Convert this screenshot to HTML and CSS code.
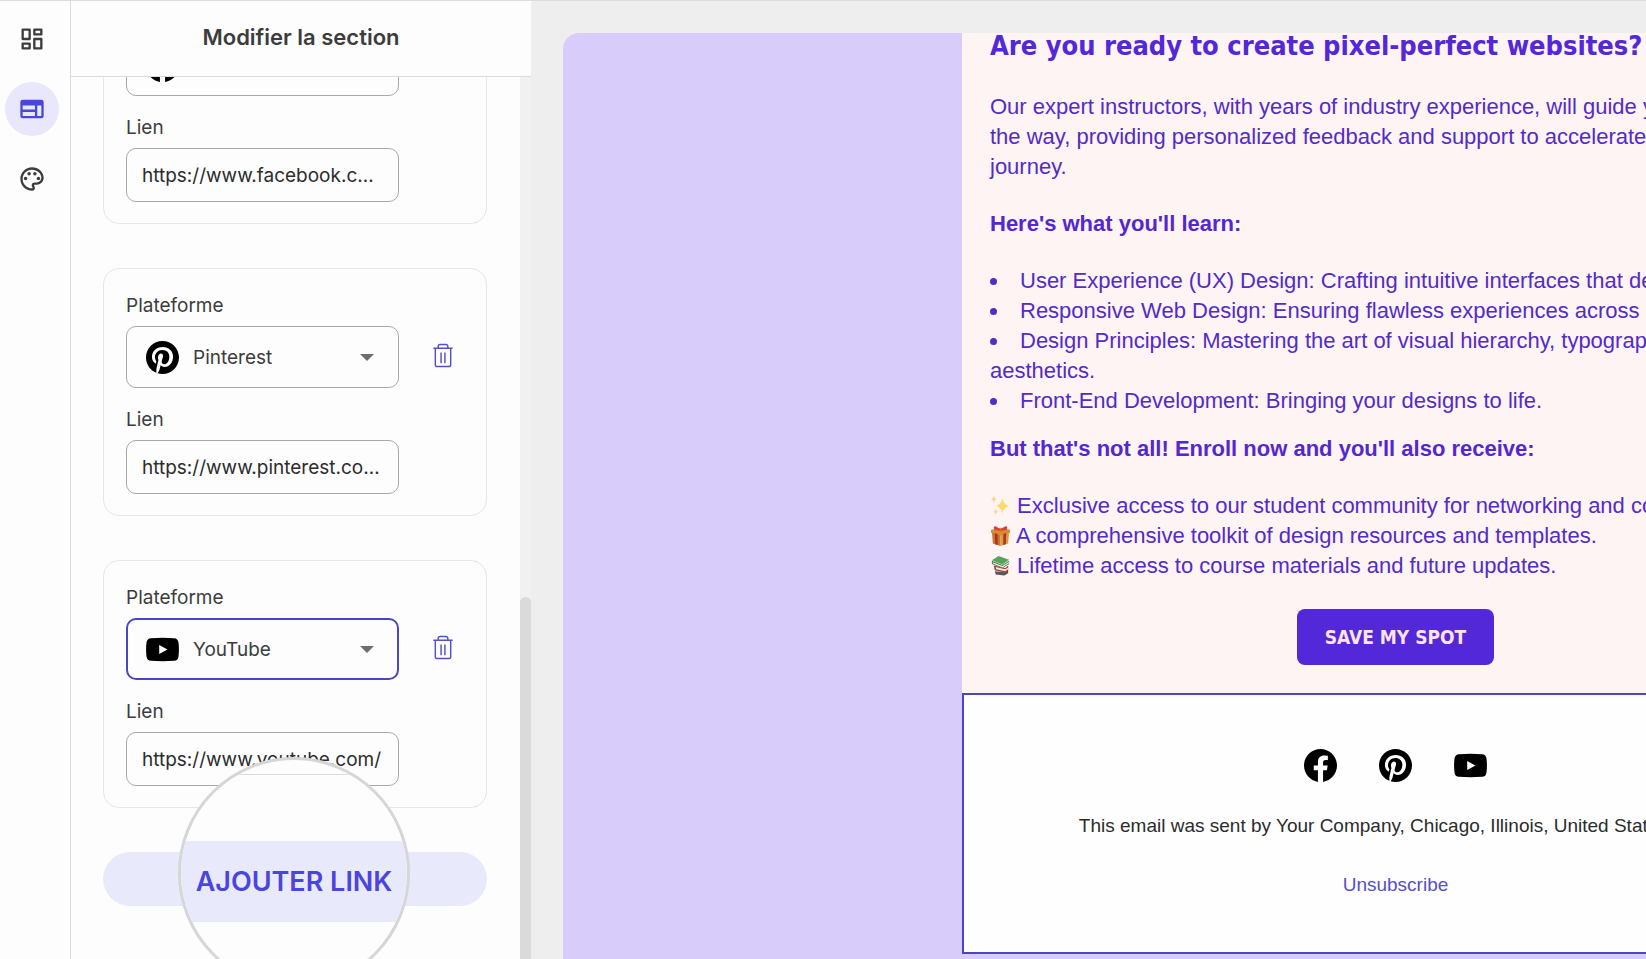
FILE: index.html
```html
<!DOCTYPE html>
<html lang="fr">
<head>
    <meta charset="UTF-8">
    <meta name="viewport" content="width=device-width, initial-scale=1.0">
    <title>Modifier la section</title>
    <link rel="stylesheet" href="styles.css">
</head>
<body>
    <!-- Shared icons -->
    <svg class="sprite" aria-hidden="true">
        <symbol id="facebook" viewBox="0 0 24 24">
            <path d="M24 12.073c0-6.627-5.373-12-12-12s-12 5.373-12 12c0 5.99 4.388 10.954 10.125 11.854v-8.385H7.078v-3.47h3.047V9.43c0-3.007 1.792-4.669 4.533-4.669 1.312 0 2.686.235 2.686.235v2.953H15.83c-1.491 0-1.956.925-1.956 1.874v2.25h3.328l-.532 3.47h-2.796v8.385C19.612 23.027 24 18.062 24 12.073z"/>
        </symbol>
        <symbol id="pinterest" viewBox="0 0 24 24">
            <path d="M12 0C5.373 0 0 5.372 0 12c0 5.084 3.163 9.426 7.627 11.174-.105-.949-.2-2.405.042-3.441.218-.937 1.407-5.965 1.407-5.965s-.359-.719-.359-1.782c0-1.668.967-2.914 2.171-2.914 1.023 0 1.518.769 1.518 1.69 0 1.029-.655 2.568-.994 3.995-.283 1.194.599 2.169 1.777 2.169 2.133 0 3.772-2.249 3.772-5.495 0-2.873-2.064-4.882-5.012-4.882-3.414 0-5.418 2.561-5.418 5.207 0 1.031.397 2.138.893 2.738a.36.36 0 0 1 .083.345l-.333 1.36c-.053.22-.174.267-.402.161-1.499-.698-2.436-2.889-2.436-4.649 0-3.785 2.75-7.262 7.929-7.262 4.163 0 7.398 2.967 7.398 6.931 0 4.136-2.607 7.464-6.227 7.464-1.216 0-2.359-.631-2.75-1.378l-.748 2.853c-.271 1.043-1.002 2.35-1.492 3.146C9.57 23.812 10.763 24 12 24c6.627 0 12-5.373 12-12S18.627 0 12 0z"/>
        </symbol>
        <symbol id="youtube" viewBox="0 0 24 24">
            <path d="M3.6 3.8Q12 3.1 20.4 3.8Q23.2 4 23.6 6.8Q24.3 12 23.6 17.2Q23.2 20 20.4 20.2Q12 20.9 3.6 20.2Q.8 20 .4 17.2Q-.3 12 .4 6.8Q.8 4 3.6 3.8zM9.6 8.8v6.4l6-3.2z"/>
        </symbol>
        <symbol id="trash" viewBox="0 0 20 26">
            <path d="M0 5.5h20M5 5.500V3.500q0-2 2-2h6q2 0 2 2v2M2 5.500v17q0 2 2 2h12q2 0 2-2v-17M8 10v11M12 10v11" fill="none" stroke="currentColor" stroke-width="1.500"/>
        </symbol>
        <symbol id="arrow" viewBox="0 0 14 7">
            <path d="M0 0h14L7 7z"/>
        </symbol>
    </svg>

    <div class="app">
        <nav class="sidebar">
            <button class="nav-btn" aria-label="Blocs">
                <svg viewBox="0 0 24 24" fill="none" stroke="currentColor" stroke-width="2" stroke-linejoin="round">
                    <rect x="4" y="4" width="6" height="8"/>
                    <rect x="14" y="4" width="6" height="4"/>
                    <rect x="14" y="12" width="6" height="8"/>
                    <rect x="4" y="16" width="6" height="4"/>
                </svg>
            </button>
            <button class="nav-btn active" aria-label="Section">
                <svg viewBox="0 0 24 24" fill="currentColor" fill-rule="evenodd">
                    <path d="M4 4h16a2 2 0 0 1 2 2v12a2 2 0 0 1-2 2H4a2 2 0 0 1-2-2V6a2 2 0 0 1 2-2zM4 9v3.500h10.500V9zM4 14.500V18h10.500v-3.500zM16.500 9v9H20V9z"/>
                </svg>
            </button>
            <button class="nav-btn" aria-label="Style">
                <svg viewBox="0 0 24 24" fill="currentColor">
                    <path d="M12 22C6.490 22 2 17.510 2 12S6.490 2 12 2s10 4.040 10 9c0 3.310-2.690 6-6 6h-1.770c-.28 0-.5.22-.5.5 0 .12.05.23.13.33.41.47.64 1.060.64 1.670A2.500 2.500 0 0 1 12 22zm0-18c-4.410 0-8 3.590-8 8s3.590 8 8 8c.28 0 .5-.22.5-.5a.54.54 0 0 0-.14-.35c-.41-.46-.63-1.050-.63-1.650a2.500 2.500 0 0 1 2.500-2.500H16c2.210 0 4-1.790 4-4 0-3.860-3.590-7-8-7z"/>
                    <circle cx="6.500" cy="11.500" r="1.500"/>
                    <circle cx="9.500" cy="7.500" r="1.500"/>
                    <circle cx="14.500" cy="7.500" r="1.500"/>
                    <circle cx="17.500" cy="11.500" r="1.500"/>
                </svg>
            </button>
        </nav>

        <section class="panel">
            <header class="panel-header">
                <h1>Modifier la section</h1>
            </header>
            <div class="panel-body">
                <!-- column-reverse keeps the list scrolled to its end -->
                <div class="panel-scroll">
                    <div class="links">
                        <div class="card">
                            <label for="platform1">Plateforme</label>
                            <div class="row">
                                <div class="select-box">
                                    <svg class="social"><use href="#facebook"/></svg>
                                    <select id="platform1">
                                        <option selected>Facebook</option>
                                        <option>Pinterest</option>
                                        <option>YouTube</option>
                                    </select>
                                    <svg class="arrow"><use href="#arrow"/></svg>
                                </div>
                                <button class="delete" aria-label="Supprimer"><svg><use href="#trash"/></svg></button>
                            </div>
                            <label for="link1">Lien</label>
                            <input type="text" id="link1" value="https://www.facebook.com/">
                        </div>

                        <div class="card">
                            <label for="platform2">Plateforme</label>
                            <div class="row">
                                <div class="select-box">
                                    <svg class="social"><use href="#pinterest"/></svg>
                                    <select id="platform2">
                                        <option>Facebook</option>
                                        <option selected>Pinterest</option>
                                        <option>YouTube</option>
                                    </select>
                                    <svg class="arrow"><use href="#arrow"/></svg>
                                </div>
                                <button class="delete" aria-label="Supprimer"><svg><use href="#trash"/></svg></button>
                            </div>
                            <label for="link2">Lien</label>
                            <input type="text" id="link2" value="https://www.pinterest.com/">
                        </div>

                        <div class="card">
                            <label for="platform3">Plateforme</label>
                            <div class="row">
                                <div class="select-box selected">
                                    <svg class="social"><use href="#youtube"/></svg>
                                    <select id="platform3">
                                        <option>Facebook</option>
                                        <option>Pinterest</option>
                                        <option selected>YouTube</option>
                                    </select>
                                    <svg class="arrow"><use href="#arrow"/></svg>
                                </div>
                                <button class="delete" aria-label="Supprimer"><svg><use href="#trash"/></svg></button>
                            </div>
                            <label for="link3">Lien</label>
                            <input type="text" id="link3" value="https://www.youtube.com/">
                        </div>

                        <button class="add-link">
                            <span class="magnifier">
                                <span class="magnifier-top"></span>
                                <span class="magnifier-label">AJOUTER LINK</span>
                            </span>
                        </button>
                    </div>
                </div>
                <div class="scrollbar"><div class="thumb"></div></div>
            </div>
        </section>

        <main class="canvas">
            <div class="email">
                <article class="email-body" lang="en">
                    <div class="email-text">
                        <h2>Are you ready to create pixel-perfect websites?</h2>
                        <p>Our expert instructors, with years of industry experience, will guide you every step of<br>the way, providing personalized feedback and support to accelerate your learning<br>journey.</p>
                        <h3>Here's what you'll learn:</h3>
                        <ul class="topics">
                            <li>User Experience (UX) Design: Crafting intuitive interfaces that delight users.</li>
                            <li>Responsive Web Design: Ensuring flawless experiences across devices.</li>
                            <li>Design Principles: Mastering the art of visual hierarchy, typography, color, and aesthetics.</li>
                            <li>Front-End Development: Bringing your designs to life.</li>
                        </ul>
                        <h3>But that's not all! Enroll now and you'll also receive:</h3>
                        <ul class="perks">
                            <li>
                                <svg viewBox="0 0 22 22">
                                    <path d="M13 3q.8 7 6.500 8.500Q13.800 13 13 20q-.8-7-6.500-8.500Q12.200 10 13 3z" fill="#fbdc6a"/>
                                    <path d="M4 1q.4 3 3 3.500Q4.400 5 4 8q-.4-3-3-3.500Q3.600 4 4 1zM6 14q.4 3 2.500 3.500Q6.400 18 6 21q-.4-3-2.500-3.500Q5.600 17 6 14z" fill="#f5d88a"/>
                                </svg>
                                Exclusive access to our student community for networking and collaboration.
                            </li>
                            <li>
                                <svg viewBox="0 0 22 22">
                                    <path d="M2 7l9 2.500V22L3 19.500z" fill="#c9772a"/>
                                    <path d="M20 7l-9 2.500V22l8-2.500z" fill="#e0993a"/>
                                    <path d="M1 5l10-2 10 2v3l-10 3L1 8z" fill="#d98a33"/>
                                    <path d="M5 8.500l3 .8V21l-2.500-.8zM14 9.300l3-.8-.5 11.700L14 21z" fill="#a8332a"/>
                                    <path d="M11 5Q5-1 4 2.500T11 6q8 0 7-3.500T11 5z" fill="#d5403a"/>
                                </svg>
                                A comprehensive toolkit of design resources and templates.
                            </li>
                            <li>
                                <svg viewBox="0 0 22 22">
                                    <path d="M5 17l10 1 4-3v4l-4 2.500-9-1z" fill="#55585c"/>
                                    <path d="M4 11l12 3 3-3v5l-3 2.500L5 16z" fill="#a83a35"/>
                                    <path d="M6 12.500l10 2.500 3-2v2l-3 2-9.500-2z" fill="#efe7dc"/>
                                    <path d="M2 6l11 4.500L20 6v3.500L13 14 2 9.500z" fill="#3c7a45"/>
                                    <path d="M3 7.500l10 4L20 7v1.500L13 13 3 9z" fill="#eef0e8"/>
                                    <path d="M2 5.500L9 1l11 4-7 5z" fill="#58a35c"/>
                                </svg>
                                Lifetime access to course materials and future updates.
                            </li>
                        </ul>
                        <a class="cta" href="#">SAVE MY SPOT</a>
                    </div>
                    <footer class="email-footer">
                        <div class="socials">
                            <a href="#" aria-label="Facebook"><svg class="social"><use href="#facebook"/></svg></a>
                            <a href="#" aria-label="Pinterest"><svg class="social"><use href="#pinterest"/></svg></a>
                            <a href="#" aria-label="YouTube"><svg class="social"><use href="#youtube"/></svg></a>
                        </div>
                        <p>This email was sent by Your Company, Chicago, Illinois, United States USA</p>
                        <a class="unsubscribe" href="#">Unsubscribe</a>
                    </footer>
                </article>
            </div>
        </main>
    </div>
</body>
</html>
```

FILE: styles.css
```css
* {
    box-sizing: border-box;
    margin: 0;
    padding: 0;
}
body {
    font-family: 'Inter', sans-serif;
    font-size: 19px;
    color: #3c3c3c;
    background: #eeeeee;
}
button {
    border: none;
    background: none;
    font-family: inherit;
    cursor: pointer;
}
ul {
    list-style: none;
}
.sprite {
    display: none;
}
.app {
    display: flex;
    height: 100vh;
    border-top: 1px solid #dcdcdc;
    overflow: hidden;
}

/* Left navigation */
.sidebar {
    display: flex;
    flex-direction: column;
    flex-shrink: 0;
    gap: 16px;
    width: 71px;
    padding: 11px 5px;
    background: #fdfdfd;
    border-right: 1px solid #dcdcdc;
}
.nav-btn {
    display: flex;
    align-items: center;
    justify-content: center;
    width: 54px;
    height: 54px;
    border-radius: 50%;
    color: #3c3c3c;
}
.nav-btn svg {
    width: 28px;
    height: 28px;
}
.nav-btn.active {
    background: #e8e7fc;
    color: #4a45dc;
}

/* Section editor */
.panel {
    display: flex;
    flex-direction: column;
    flex-shrink: 0;
    width: 460px;
    background: #fdfdfd;
}
.panel-header {
    display: flex;
    align-items: center;
    justify-content: center;
    height: 76px;
    flex-shrink: 0;
    padding-bottom: 4px;
    border-bottom: 1px solid #dcdcdc;
}
.panel-header h1 {
    font-size: 22px;
    font-weight: 600;
}
.panel-body {
    display: flex;
    flex: 1;
    min-height: 0;
}
.panel-scroll {
    display: flex;
    flex-direction: column-reverse;
    flex: 1;
    overflow-y: auto;
    overflow-x: hidden;
    scrollbar-width: none;
}
.links {
    display: flex;
    flex-direction: column;
    gap: 44px;
    padding: 32px 33px 53px 32px;
}
.card {
    display: flex;
    flex-direction: column;
    gap: 8px;
    padding: 25px 22px 21px;
    border: 1px solid #e6e6e6;
    border-radius: 16px;
}
.card label {
    line-height: 24px;
}
.row {
    display: flex;
    align-items: center;
    gap: 34px;
    margin-bottom: 12px;
}
.select-box {
    display: flex;
    align-items: center;
    width: 273px;
    height: 62px;
    padding: 0 24px 0 19px;
    border: 1px solid #a8a8a8;
    border-radius: 10px;
}
.select-box.selected {
    padding: 0 23px 0 18px;
    border: 2px solid #4a45c4;
}
.select-box select {
    flex: 1;
    min-width: 0;
    margin-left: 14px;
    border: none;
    outline: none;
    background: none;
    appearance: none;
    font: inherit;
    color: #3c3c3c;
}
.social {
    display: block;
    width: 33px;
    height: 33px;
    fill: #000;
}
.arrow {
    width: 14px;
    height: 7px;
    fill: #6e6e6e;
}
.delete {
    margin-bottom: 3px;
    color: #5450c8;
}
.delete svg {
    display: block;
    width: 20px;
    height: 25px;
}
.card input {
    width: 273px;
    height: 54px;
    padding: 0 14px 0 15px;
    border: 1px solid #a8a8a8;
    border-radius: 10px;
    background: none;
    font: inherit;
    color: #2c2c2c;
    text-overflow: ellipsis;
}
.add-link {
    position: relative;
    height: 54px;
    border-radius: 27px;
    background: #e9e9fc;
}
.magnifier {
    position: absolute;
    top: 50%;
    left: 50%;
    width: 232px;
    height: 232px;
    margin: -122px 0 0 -117px;
    border: 3px solid #d6d6d6;
    border-radius: 50%;
    background: #fdfdfd;
    overflow: hidden;
}
.magnifier-top {
    display: block;
    height: 15px;
    margin-bottom: 66px;
    border-bottom: 1px solid #dcdcdc;
}
.magnifier-label {
    display: block;
    background: #e9e9fc;
    color: #4a45dc;
    font-size: 27px;
    font-weight: 600;
    line-height: 81px;
    white-space: nowrap;
}
.scrollbar {
    display: flex;
    align-items: flex-end;
    width: 11px;
    background: #f1f1f1;
}
.thumb {
    width: 100%;
    height: 41%;
    border-radius: 6px 6px 0 0;
    background: #dadada;
}

/* Email preview */
.canvas {
    flex: 1;
    min-width: 0;
    padding: 32px 0 0 32px;
    overflow: hidden;
}
.email {
    width: max-content;
    height: 100%;
    padding: 0 399px;
    border-radius: 16px 16px 0 0;
    background: #d8ccfa;
}
.email-body {
    width: 867px;
    background: #fdf4f3;
    font-family: 'Liberation Sans', Arial, sans-serif;
    color: #532bc8;
}
.email-text {
    display: flex;
    flex-direction: column;
    padding: 0 8px 28px 28px;
    font-size: 22px;
    line-height: 30px;
}
.email-text h2 {
    margin-bottom: 33px;
    font-family: 'DejaVu Sans Condensed', Tahoma, sans-serif;
    font-size: 27px;
    line-height: 26px;
    color: #5328d8;
}
.email-text h3 {
    margin: 27px 0;
    font-size: 22px;
    color: #5328d0;
}
.topics {
    list-style: disc inside;
}
.topics + h3 {
    margin-top: 18px;
}
.perks {
    margin-bottom: 28px;
}
.perks svg {
    width: 21px;
    height: 21px;
    vertical-align: -3px;
}
.cta {
    align-self: center;
    margin-right: 20px;
    padding: 0 28px;
    border-radius: 8px;
    background: #5328d8;
    color: #fbe3ea;
    font-family: 'DejaVu Sans Condensed', Tahoma, sans-serif;
    font-size: 19px;
    font-weight: 700;
    line-height: 56px;
    text-decoration: none;
}
.email-footer {
    display: flex;
    flex-direction: column;
    align-items: center;
    gap: 29px;
    padding: 54px 28px 52px;
    border: 2px solid #4a45c4;
    background: #fefefe;
    color: #2c2c2c;
    font-size: 19px;
    line-height: 30px;
}
.socials {
    display: flex;
    gap: 42px;
}
.unsubscribe {
    color: #5450c8;
    text-decoration: none;
}
```
